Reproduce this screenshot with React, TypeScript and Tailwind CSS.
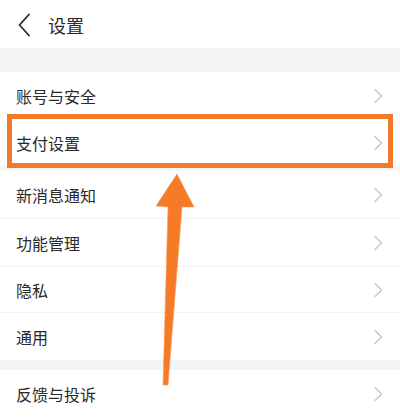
import React from "react";

const Chevron = () => (
  <svg width="10" height="16" viewBox="0 0 10 16" className="shrink-0">
    <path d="M2 1.5 L8.5 8 L2 14.5" fill="none" stroke="#c4c4c4" strokeWidth="1.3" strokeLinecap="round" strokeLinejoin="round" />
  </svg>
);

const Row = ({ label, h = "h-[47px]" }: { label: string; h?: string }) => (
  <div className={`flex items-center justify-between pl-[16px] pr-[17px] ${h} bg-white`}>
    <span className="text-[16px] text-[#2a2a2a] leading-none">{label}</span>
    <Chevron />
  </div>
);

const Divider = () => <div className="h-px bg-[#f2f2f2]" />;

export default function App() {
  return (
    <div
      className="relative w-[400px] h-[418px] overflow-hidden bg-white"
      style={{ fontFamily: '"Noto Sans CJK SC", "Noto Sans", sans-serif' }}
    >
      <div className="flex items-center h-[48px] pt-[2px] bg-white">
        <svg width="14" height="24" viewBox="0 0 14 24" className="ml-[17px]">
          <path d="M12 1.5 L2.5 12 L12 22.5" fill="none" stroke="#2a2a2a" strokeWidth="1.8" strokeLinecap="round" strokeLinejoin="round" />
        </svg>
        <span className="ml-[17px] text-[18px] text-[#2a2a2a] leading-none">设置</span>
      </div>
      <div className="h-[24px] bg-[#f4f4f4]" />
      <Row label="账号与安全" />
      <Row label="支付设置" />
      <div className="h-[5px] bg-[#f5f5f5]" />
      <Row label="新消息通知" />
      <Divider />
      <Row label="功能管理" />
      <Divider />
      <Row label="隐私" h="h-[45px]" />
      <Divider />
      <Row label="通用" />
      <div className="h-[10px] bg-[#f4f4f4]" />
      <Row label="反馈与投诉" h="h-[48px]" />

      <div className="absolute left-[7px] top-[114px] w-[386px] h-[54px] border-[5px] border-[#f47a2b]" />
      <svg className="absolute left-0 top-0" width="400" height="418" viewBox="0 0 400 418">
        <polygon
          points="177,174 156,206 168,207 163,385 168,385 182,207 194,207"
          fill="#f57b27"
          stroke="#f89a55"
          strokeWidth="0.6"
          strokeLinejoin="round"
        />
      </svg>
    </div>
  );
}
